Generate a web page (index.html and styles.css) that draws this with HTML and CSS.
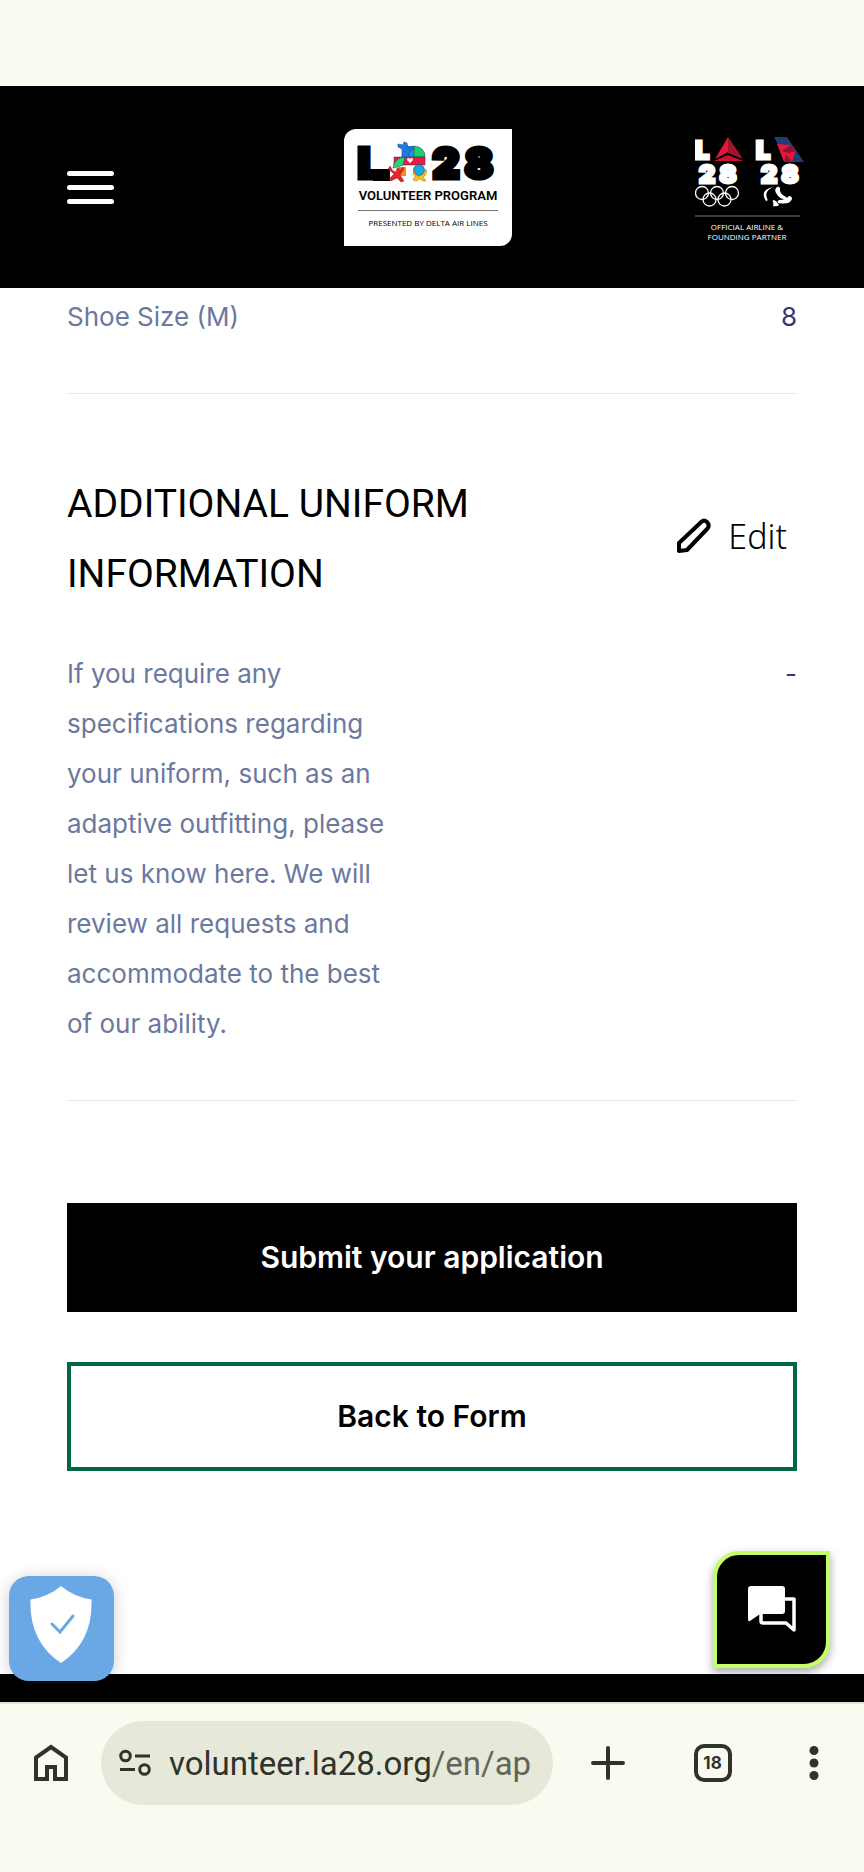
FILE: index.html
```html
<!DOCTYPE html>
<html lang="en">
<head>
    <meta charset="UTF-8">
    <meta name="viewport" content="width=device-width, initial-scale=1.0">
    <title>LA28 Volunteer Program</title>
    <link rel="stylesheet" href="styles.css">
</head>
<body>
    <div class="status-bar"></div>

    <div class="page">
        <header class="header">
            <button class="menu-button" aria-label="Menu">
                <span class="menu-line"></span>
                <span class="menu-line"></span>
                <span class="menu-line"></span>
            </button>

            <a href="#" class="logo" aria-label="LA28 Volunteer Program">
                <svg width="168" height="117" viewBox="0 0 168 117">
                    <path d="M12 0H168V105a12 12 0 0 1-12 12H0V12A12 12 0 0 1 12 0Z" fill="#fff"/>
                    <g class="logo-heavy" fill="#000" stroke="#000" stroke-width="5" font-size="41">
                        <text x="14" y="49">L</text>
                        <text x="102" y="49" text-anchor="middle">2</text>
                        <text x="135" y="49" text-anchor="middle">8</text>
                    </g>
                    <rect x="29" y="40" width="17" height="12" fill="#000"/>
                    <path d="M61 17h9v12h-9z" fill="#2f86e8"/>
                    <path d="M54 15l5 1 1-3 3 1 1 5 5-2 1 2-5 4v6h-7v-9l-4-2z" fill="#1f7ae0" stroke="#15539c" stroke-width=".6"/>
                    <path d="M70 17q11 1 11 11H70z" fill="#17d070" stroke="#333" stroke-width=".5"/>
                    <path d="M50 28h31v8H50z" fill="#e81e4a" stroke="#333" stroke-width=".5"/>
                    <path d="M66 34l-3-3q0-2 1.500-2t1.500 1.500q0-1.500 1.500-1.500t1.500 2z" fill="#fff"/>
                    <path d="M49 39q1-10 12-11l-2 8q-4 2-10 3z" fill="#20d878" stroke="#333" stroke-width=".5"/>
                    <path d="M53 38h9v9h-9z" fill="#f28c1c"/>
                    <circle cx="75" cy="41" r="5.500" fill="#18a8e0" stroke="#333" stroke-width=".5"/>
                    <path d="M46 37l3 5 5 1 5-5 1 2-4 6 4 6-3 1-4-4-6 3-2-2 5-5-6-5z" fill="#e3242b" stroke="#8c1414" stroke-width=".4"/>
                    <path d="M70 41q1 6 5 6t7-7q2 5-3 8l3 4h-3l-3-2-4 2-3-1 2-4q-3-2-1-6z" fill="#fcbf1e" stroke="#7a5c0c" stroke-width=".4"/>
                    <circle cx="54" cy="41" r="2" fill="#e3242b"/>
                    <text class="logo-program" x="84" y="71" font-size="13" text-anchor="middle">VOLUNTEER PROGRAM</text>
                    <path d="M14 81.500H154" stroke="#777"/>
                    <text class="logo-small" x="84" y="97" font-size="8" text-anchor="middle">PRESENTED BY DELTA AIR LINES</text>
                </svg>
            </a>

            <svg class="partner-logo" width="110" height="108" viewBox="0 0 110 108" role="img" aria-label="Official airline and founding partner">
                <g class="logo-heavy" fill="#fff" stroke="#fff" stroke-width="3" font-size="25">
                    <text x="0" y="25">L</text>
                    <text x="12" y="49" text-anchor="middle">2</text>
                    <text x="33" y="49" text-anchor="middle">8</text>
                    <text x="61" y="25">L</text>
                    <text x="74" y="49" text-anchor="middle">2</text>
                    <text x="95" y="49" text-anchor="middle">8</text>
                </g>
                <path d="M33 3l15 22-15-6z" fill="#a5132f"/>
                <path d="M33 3v15l-13 7z" fill="#e51937"/>
                <path d="M33 21l-14 6h14zM33 21l15 6H33z" fill="#c8152f"/>
                <path d="M79 3h13l17 25H92z" fill="#1b3d78"/>
                <path d="M82 10l14 1 5 6-4 11h-8z" fill="#e51937"/>
                <path d="M87 17l9-6 5 6-7 2zM91 20l6 8h-8z" fill="#8e1330"/>
                <g fill="none" stroke="#fff" stroke-width="1.300">
                    <circle cx="7" cy="59" r="6.500"/>
                    <circle cx="22" cy="59" r="6.500"/>
                    <circle cx="37" cy="59" r="6.500"/>
                    <circle cx="14.500" cy="65.500" r="6.500"/>
                    <circle cx="29.500" cy="65.500" r="6.500"/>
                </g>
                <g fill="#fff">
                    <path d="M78 53q-14 3-7 14 2 0 1.500-1.500-4-8 5.500-12.500z"/>
                    <path d="M82 53q-3 2-1 6 3 6 11 7 1-2-1-3-7-3-6-9-1-2-3-1z"/>
                    <path d="M94 62q3 0 3 3-2 6-14 4-1-2 1-3 7 0 10-4z"/>
                    <path d="M79 66q3 1 5 5-2 2-6 1 1-2 0-4-1-2 1-2z"/>
                </g>
                <path d="M0 82H105" stroke="#555" stroke-width="1.500"/>
                <g class="logo-small" fill="#fff" font-size="8" text-anchor="middle">
                    <text x="52" y="96">OFFICIAL AIRLINE &amp;</text>
                    <text x="52" y="106">FOUNDING PARTNER</text>
                </g>
            </svg>
        </header>

        <main class="content">
            <dl class="row">
                <dt class="row-label">Shoe Size (M)</dt>
                <dd class="row-value">8</dd>
            </dl>

            <section class="section">
                <div class="section-head">
                    <h2 class="section-title">ADDITIONAL UNIFORM INFORMATION</h2>
                    <button class="edit-button">
                        <svg width="36" height="36" viewBox="0 0 36 36" fill="none" stroke="#000" stroke-width="4" stroke-linejoin="round">
                            <path d="M3 33V25L25.500 3.800Q28 1.500 31 4q3 3 .5 6.500L11 32z"/>
                        </svg>
                        Edit
                    </button>
                </div>
                <dl class="row">
                    <dt class="row-label">If you require any specifications regarding your uniform, such as an adaptive outfitting, please let us know here. We will review all requests and accommodate to the best of our ability.</dt>
                    <dd class="row-value">-</dd>
                </dl>
            </section>

            <div class="actions">
                <button class="button">Submit your application</button>
                <button class="button button-outline">Back to Form</button>
            </div>
        </main>

        <footer class="footer"></footer>

        <button class="privacy-button" aria-label="Privacy settings">
            <svg width="62" height="78" viewBox="0 0 62 78">
                <path d="M31 0Q44 11 61.500 13.500Q63 56 31 77Q-1 56 .5 13.500Q18 11 31 0Z" fill="#fff"/>
                <path d="M22 38l8 8 13-16" fill="none" stroke="#69a8e5" stroke-width="3" stroke-linecap="round"/>
            </svg>
        </button>

        <button class="chat-button" aria-label="Chat">
            <svg width="48" height="47" viewBox="0 0 48 47">
                <path d="M3 0H34q3 0 3 3V25q0 3-3 3H12L2 35q-2 1-2-2V3Q0 0 3 0Z" fill="#fff"/>
                <path d="M37 13h9v31l-8-7H15q-2 0-2-2v-7" fill="none" stroke="#fff" stroke-width="3.500" stroke-linejoin="round"/>
            </svg>
        </button>
    </div>

    <nav class="browser-bar">
        <button class="bar-button" aria-label="Home">
            <svg width="36" height="40" viewBox="0 0 36 40" fill="none" stroke="#30332a" stroke-width="4">
                <path d="M3 36V14.500L18 4l15 10.500V36H22V24h-8v12z"/>
            </svg>
        </button>
        <div class="address">
            <svg class="address-icon" width="32" height="28" viewBox="0 0 32 28" fill="none" stroke="#30332a" stroke-width="3">
                <circle cx="6.500" cy="7" r="4.800"/>
                <path d="M16 7h15M1 20.500h15"/>
                <circle cx="25.500" cy="20.500" r="4.800"/>
            </svg>
            <a href="#" class="address-text">volunteer.la28.org<span class="address-path">/en/ap</span></a>
        </div>
        <button class="bar-button" aria-label="New tab">
            <svg width="34" height="34" viewBox="0 0 34 34" stroke="#30332a" stroke-width="4" stroke-linecap="round">
                <path d="M17 2v30M2 17h30"/>
            </svg>
        </button>
        <button class="bar-button" aria-label="Tabs">
            <span class="tab-count">18</span>
        </button>
        <button class="bar-button" aria-label="More">
            <svg width="10" height="34" viewBox="0 0 10 34" fill="#30332a">
                <circle cx="5" cy="4.500" r="4.500"/>
                <circle cx="5" cy="17" r="4.500"/>
                <circle cx="5" cy="29.500" r="4.500"/>
            </svg>
        </button>
    </nav>
</body>
</html>
```
FILE: styles.css
```css
* {
    box-sizing: border-box;
}
body {
    font-family: Inter, "Liberation Sans", sans-serif;
    background: #fafaf0;
    margin: 0;
    min-height: 100vh;
    display: flex;
    flex-direction: column;
}
button {
    font-family: inherit;
    border: none;
    padding: 0;
    background: none;
    cursor: pointer;
}
svg {
    display: block;
}
.status-bar {
    height: 86px;
}
.page {
    position: relative;
    flex: 1;
    display: flex;
    flex-direction: column;
    background: #fff;
}

/* Header */
.header {
    display: grid;
    grid-template-columns: 1fr auto 1fr;
    align-items: center;
    padding: 43px 59px 42px 67px;
    background: #000;
}
.menu-button {
    display: flex;
    flex-direction: column;
    gap: 9px;
    width: 47px;
}
.menu-line {
    height: 5px;
    border-radius: 3px;
    background: #fff;
}
.logo {
    margin-left: -16px;
}
.partner-logo {
    justify-self: end;
}
.logo-heavy {
    font-family: Inter, sans-serif;
    font-weight: 900;
}
.logo-program {
    font-family: Roboto, sans-serif;
    font-weight: 600;
}
.logo-small {
    font-family: "Open Sans", sans-serif;
    font-weight: 500;
}

/* Application summary */
.content {
    flex: 1;
    padding: 4px 67px 0;
}
.row {
    display: flex;
    justify-content: space-between;
    margin: 0;
    padding-bottom: 51px;
    border-bottom: 1px solid #e2e8ee;
    font-size: 26px;
    line-height: 50px;
}
.row-label {
    width: 46%;
    color: #6b789f;
}
.row-value {
    margin: 0;
    color: #2f3a70;
}
.section {
    padding-top: 75px;
}
.section-head {
    display: flex;
    align-items: center;
    justify-content: space-between;
    margin-bottom: 40px;
}
.section-title {
    width: 60%;
    margin: 0;
    font-family: Roboto, sans-serif;
    font-size: 39px;
    font-weight: 400;
    line-height: 70px;
}
.edit-button {
    display: flex;
    align-items: center;
    gap: 16px;
    padding: 0 10px 6px;
    font-family: "Noto Sans", sans-serif;
    font-size: 34px;
    font-weight: 300;
    color: #000;
}
.actions {
    display: flex;
    flex-direction: column;
    gap: 50px;
    padding-top: 102px;
}
.button {
    padding: 32px 20px;
    border: 4px solid #000;
    background: #000;
    color: #fff;
    font-size: 30px;
    font-weight: 600;
    line-height: 37px;
}
.button-outline {
    border-color: #006646;
    background: #fff;
    color: #000;
}
.footer {
    height: 28px;
    background: #000;
}

/* Floating buttons */
.privacy-button,
.chat-button {
    position: absolute;
    display: flex;
    justify-content: center;
    align-items: center;
}
.privacy-button {
    left: 9px;
    bottom: 21px;
    width: 105px;
    height: 105px;
    padding-bottom: 8px;
    padding-right: 2px;
    border-radius: 20px;
    background: #69a8e5;
    box-shadow: 0 2px 16px rgba(0, 0, 0, 0.2);
}
.chat-button {
    right: 34px;
    bottom: 34px;
    width: 117px;
    height: 117px;
    border: 4px solid #c2ff66;
    border-radius: 26px 0;
    background: #000;
    box-shadow: 0 4px 10px rgba(0, 0, 0, 0.35);
}

/* Browser toolbar */
.browser-bar {
    display: grid;
    grid-template-columns: 101px 1fr 109px 101px 101px;
    padding: 17px 0 67px;
    border-top: 2px solid #e2e3d5;
}
.bar-button {
    display: flex;
    justify-content: center;
    align-items: center;
    height: 84px;
}
.address {
    display: flex;
    align-items: center;
    gap: 18px;
    height: 84px;
    padding: 0 18px;
    border-radius: 42px;
    background: #e6e8da;
    overflow: hidden;
}
.address-icon {
    flex: none;
}
.address-text {
    font-family: Roboto, sans-serif;
    font-size: 33px;
    color: #30332a;
    text-decoration: none;
    white-space: nowrap;
}
.address-path {
    color: #626557;
}
.tab-count {
    width: 38px;
    height: 38px;
    border: 4px solid #30332a;
    border-radius: 10px;
    font-size: 17px;
    font-weight: 700;
    line-height: 30px;
    color: #30332a;
}
```
